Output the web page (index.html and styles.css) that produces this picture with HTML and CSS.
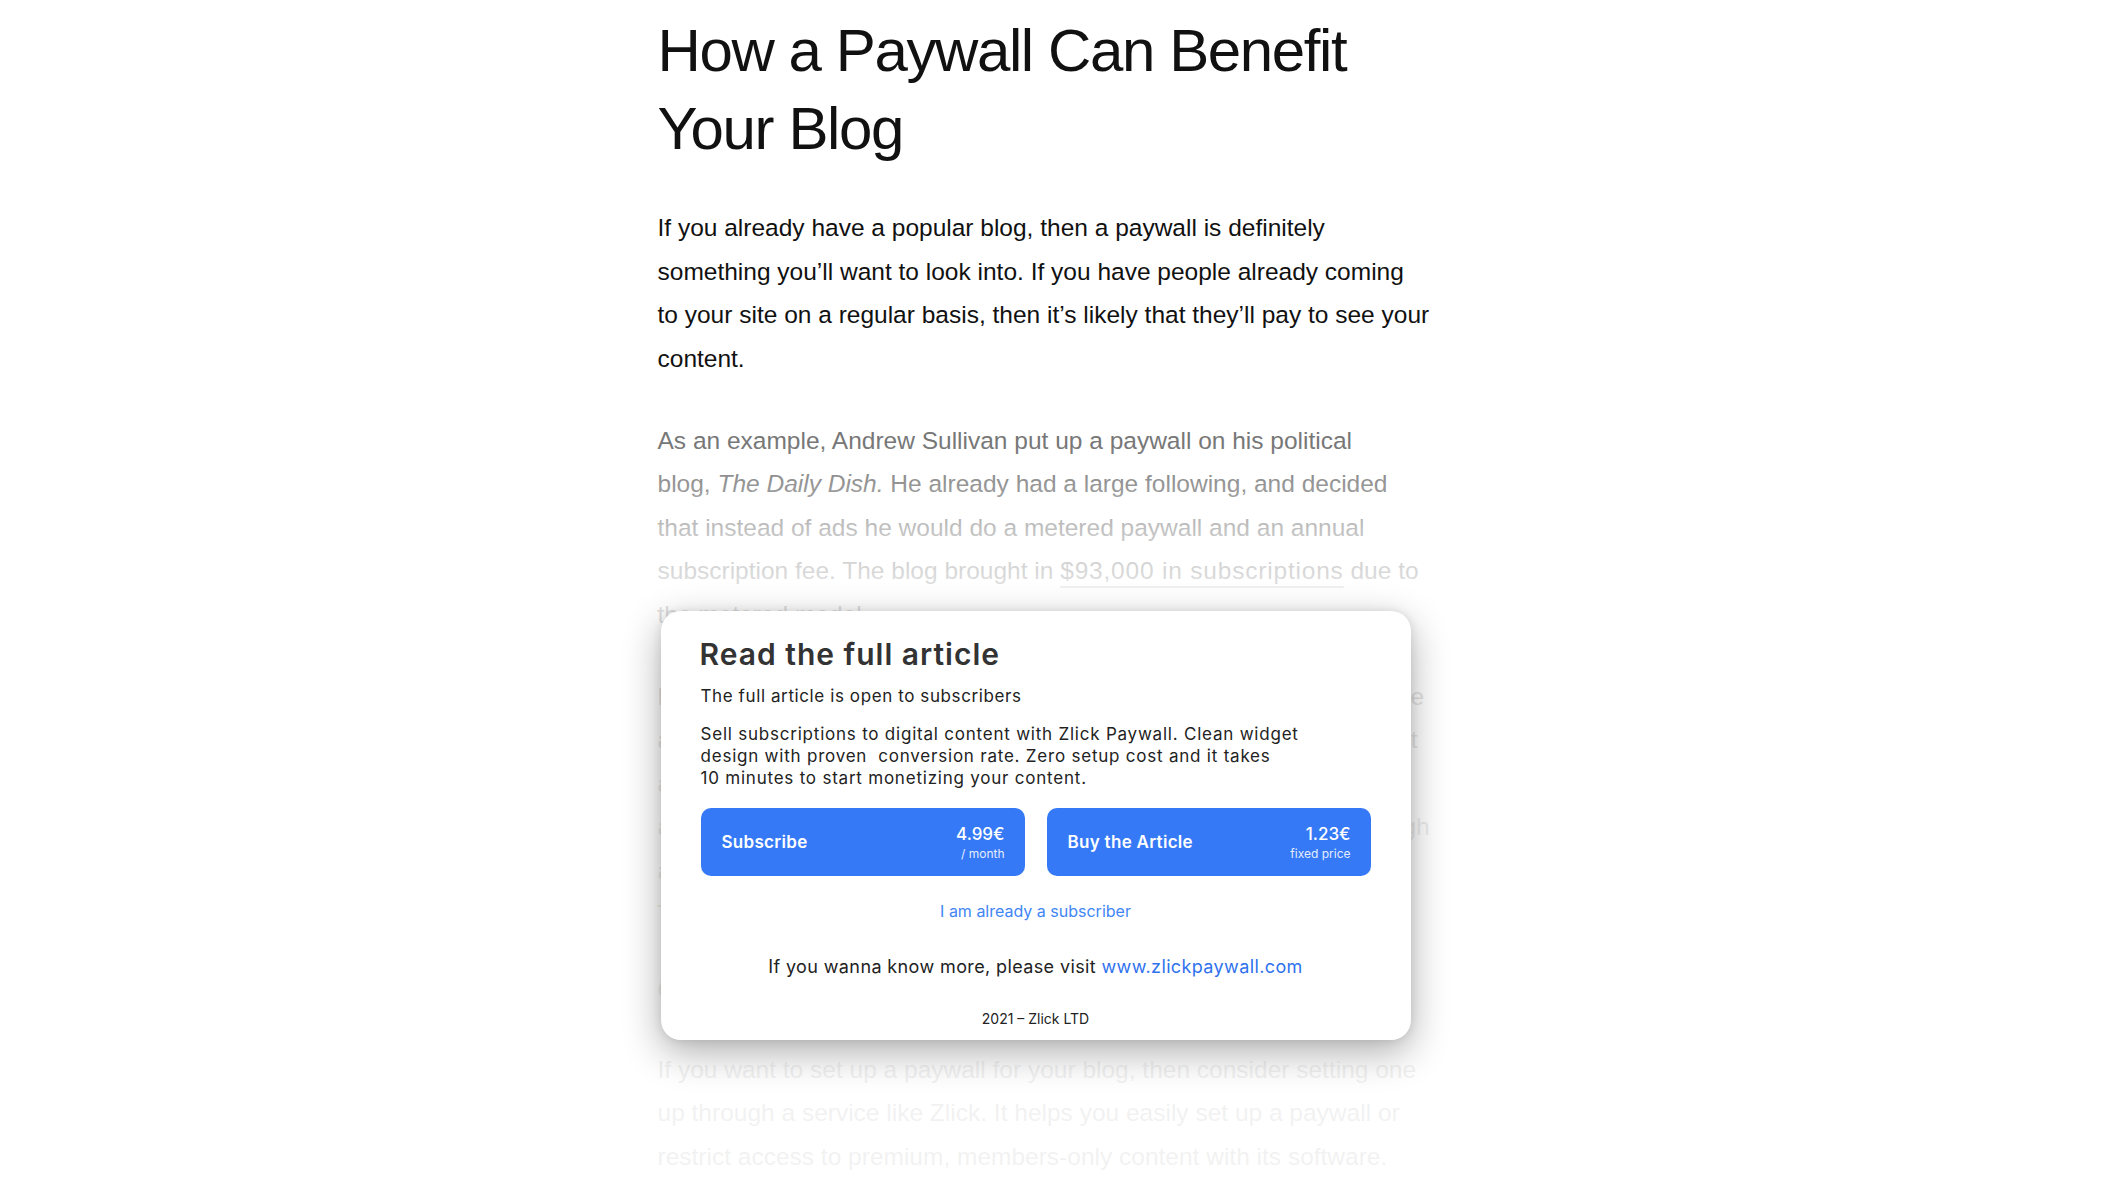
FILE: index.html
```html
<!DOCTYPE html>
<html lang="en">
<head>
<meta charset="utf-8">
<title>How a Paywall Can Benefit Your Blog</title>
<link rel="stylesheet" href="styles.css">
</head>
<body>
<main class="article">
  <h1 class="title">How a Paywall Can Benefit Your Blog</h1>
  <p class="text">If you already have a popular blog, then a paywall is definitely<br>something you’ll want to look into. If you have people already coming<br>to your site on a regular basis, then it’s likely that they’ll pay to see your<br>content.</p>

  <div class="locked">
    <p class="text">As an example, Andrew Sullivan put up a paywall on his political<br>blog, <em>The Daily Dish.</em>&nbsp;He already had a large following, and decided<br>that instead of ads he would do a metered paywall and an annual<br>subscription fee. The blog brought in <a class="text-link" href="#">$93,000 in subscriptions</a> due to<br>the metered model.</p>
    <p class="text">Not every blog will make that much, but there are many reasons to use<br>a paywall. It gives you a steady income that doesn’t rely on ad content<br>and it rewards the readers who value your work the most. A loyal<br>audience will gladly support writing they enjoy if the price is low enough<br>and the process of paying is quick, simple and safe for everyone.<br>That is exactly what a good paywall service should offer.</p>
    <h2 class="subtitle">Getting started</h2>
    <p class="text">If you want to set up a paywall for your blog, then consider setting one<br>up through a service like Zlick. It helps you easily set up a paywall or<br>restrict access to premium, members-only content with its software.</p>

    <div class="fade"></div>

    <section class="paywall">
      <h3 class="pw-title">Read the full article</h3>
      <p class="pw-sub">The full article is open to subscribers</p>
      <p class="pw-desc">Sell subscriptions to digital content with Zlick Paywall. Clean widget<br>design with proven&nbsp; conversion rate. Zero setup cost and it takes<br>10 minutes to start monetizing your content.</p>
      <div class="pw-buttons">
        <a class="pw-btn" href="#">
          <span class="pw-btn-label">Subscribe</span>
          <span class="pw-price"><span class="pw-amount">4.99€</span><span class="pw-unit">/ month</span></span>
        </a>
        <a class="pw-btn" href="#">
          <span class="pw-btn-label">Buy the Article</span>
          <span class="pw-price"><span class="pw-amount">1.23€</span><span class="pw-unit">fixed price</span></span>
        </a>
      </div>
      <p class="pw-login"><a href="#">I am already a subscriber</a></p>
      <p class="pw-more">If you wanna know more, please visit <a href="#">www.zlickpaywall.com</a></p>
      <p class="pw-copy">2021 – Zlick LTD</p>
    </section>
  </div>
</main>
</body>
</html>
```
FILE: styles.css
```css
html, body {
  margin: 0;
  padding: 0;
  background: #ffffff;
}

body {
  font-family: "Liberation Sans", Arial, Helvetica, sans-serif;
  color: #111111;
  overflow: hidden;
}

.article {
  width: 800px;
  margin: 0 auto;
}

.title {
  margin: 12px 0 38px;
  font-size: 60px;
  line-height: 78px;
  font-weight: 400;
  letter-spacing: -1.4px;
  color: #111111;
}

.text {
  margin: 0 0 38.5px;
  font-size: 24.5px;
  line-height: 43.5px;
  white-space: nowrap;
}

.locked {
  position: relative;
  color: #777777;
}

.subtitle {
  margin: 0 0 41.5px;
  font-size: 28px;
  line-height: 32px;
  font-weight: 700;
}

.text-link {
  color: inherit;
  letter-spacing: 0.8px;
  text-decoration: underline;
  text-decoration-color: rgba(150, 150, 150, 0.55);
  text-decoration-thickness: 1.5px;
  text-underline-offset: 7px;
}

.fade {
  position: absolute;
  inset: 0;
  pointer-events: none;
  background: linear-gradient(
    to bottom,
    rgba(255, 255, 255, 0) 0px,
    rgba(255, 255, 255, 0) 25px,
    rgba(255, 255, 255, 0.25) 70px,
    rgba(255, 255, 255, 0.58) 115px,
    rgba(255, 255, 255, 0.74) 160px,
    rgba(255, 255, 255, 0.86) 400px,
    rgba(255, 255, 255, 0.9) 700px
  );
}

.paywall {
  position: absolute;
  top: 192px;
  left: 3px;
  width: 750px;
  box-sizing: border-box;
  padding: 25px 40px 12px;
  background: #ffffff;
  border-radius: 20px;
  box-shadow: 0 12px 38px rgba(0, 0, 0, 0.32), 0 0 10px rgba(0, 0, 0, 0.1);
  font-family: Inter, "Noto Sans", sans-serif;
  color: #222222;
}

.pw-title {
  margin: 0 0 13px -1px;
  font-size: 30px;
  line-height: 36px;
  font-weight: 600;
  letter-spacing: 1px;
  color: #333333;
}

.pw-sub {
  margin: 0 0 16px;
  font-size: 17px;
  line-height: 22px;
  letter-spacing: 0.6px;
}

.pw-desc {
  margin: 0 0 19.6px;
  font-size: 17px;
  line-height: 22px;
  letter-spacing: 0.78px;
}

.pw-buttons {
  display: grid;
  grid-template-columns: 1fr 1fr;
  gap: 22px;
}

.pw-btn {
  height: 68px;
  box-sizing: border-box;
  display: flex;
  align-items: center;
  justify-content: space-between;
  padding: 0 20px 0 21px;
  border-radius: 10px;
  background: #3579f6;
  color: #ffffff;
  text-decoration: none;
}

.pw-btn-label {
  font-size: 17px;
  line-height: 20px;
  font-weight: 600;
  letter-spacing: 0.3px;
}

.pw-price {
  display: flex;
  flex-direction: column;
  align-items: flex-end;
  padding-top: 3px;
}

.pw-amount {
  font-size: 17px;
  line-height: 20px;
  font-weight: 500;
}

.pw-unit {
  font-size: 12px;
  line-height: 20px;
  opacity: 0.88;
}

.pw-login {
  margin: 24.8px 0 0;
  text-align: center;
  font-size: 16px;
  line-height: 20px;
}

.pw-login a {
  color: #3f86f5;
  text-decoration: none;
}

.pw-more {
  margin: 35.2px 0 0;
  text-align: center;
  font-size: 18px;
  line-height: 22px;
  letter-spacing: 0.38px;
  color: #222222;
}

.pw-more a {
  color: #2f72ee;
  text-decoration: none;
}

.pw-copy {
  margin: 31.6px 0 0;
  text-align: center;
  font-size: 14px;
  line-height: 18px;
  color: #222222;
}
```
